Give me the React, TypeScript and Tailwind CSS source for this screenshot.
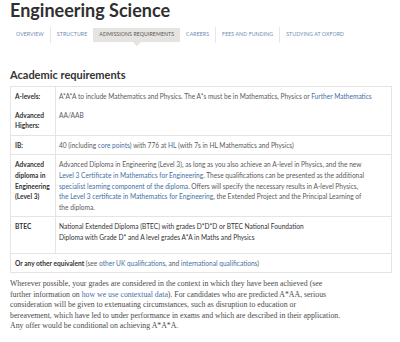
import React from 'react';

const tabs = [
  { label: 'Overview' },
  { label: 'Structure' },
  { label: 'Admissions requirements', active: true },
  { label: 'Careers' },
  { label: 'Fees and funding' },
  { label: 'Studying at Oxford' },
];

const A = ({ children }: { children: React.ReactNode }) => (
  <span className="text-[#3f6fa3]">{children}</span>
);

const Label = ({ children }: { children: React.ReactNode }) => (
  <td className="w-[45px] align-top px-[4px] py-[4px] font-bold text-[#333] border-r border-[#e4e4e4]">{children}</td>
);

const Cell = ({ children }: { children: React.ReactNode }) => (
  <td className="align-top px-[3px] py-[4px] text-[#5a5a5a] whitespace-nowrap">{children}</td>
);

export default function App() {
  return (
    <div className="w-[400px] h-[342px] overflow-hidden bg-white px-[10px] font-['Lato','Open_Sans',sans-serif]">
      <h1 className="text-[18px] leading-[22px] font-bold text-[#2f2f2f] -mt-[1px]">Engineering Science</h1>

      {/* Tabs */}
      <nav className="mt-[7px] flex items-stretch h-[14px]">
        {tabs.map((t, i) => {
          const prevActive = i > 0 && tabs[i - 1].active;
          const sep = i > 0 && !t.active && !prevActive;
          return (
            <div key={t.label} className="flex items-stretch">
              {sep && <div className="w-px bg-[#e6e6e6] -my-[1px]" />}
              <div
                className={`relative flex items-center px-[6px] text-[5.2px] uppercase tracking-[0.1px] ${
                  t.active ? 'bg-[#e6e4e0] text-[#555]' : 'text-[#6a8cb3]'
                }`}
              >
                {t.label}
                {t.active && (
                  <span className="absolute left-1/2 -bottom-[4px] -ml-[4px] w-0 h-0 border-l-[4px] border-r-[4px] border-t-[4px] border-l-transparent border-r-transparent border-t-[#e6e4e0]" />
                )}
              </div>
            </div>
          );
        })}
      </nav>

      <h2 className="mt-[26px] text-[11px] leading-[14px] font-bold text-[#333]">Academic requirements</h2>

      <table className="mt-[4px] w-[382px] border border-[#e4e4e4] border-collapse text-[6.6px] leading-[10.6px]">
        <tbody>
          <tr>
            <Label>A-levels:</Label>
            <Cell>
              A*A*A to include Mathematics and Physics. The A*s must be in Mathematics, Physics or <A>Further Mathematics</A>
            </Cell>
          </tr>
          <tr className="border-b border-[#e4e4e4]">
            <Label>
              Advanced
              <br />
              Highers:
            </Label>
            <Cell>AA/AAB</Cell>
          </tr>
          <tr className="border-b border-[#e4e4e4]">
            <Label>IB:</Label>
            <Cell>
              40 (including <A>core points</A>) with 776 at <A>HL</A> (with 7s in HL Mathematics and Physics)
            </Cell>
          </tr>
          <tr className="border-b border-[#e4e4e4]">
            <Label>
              Advanced
              <br />
              diploma in
              <br />
              Engineering
              <br />
              (Level 3)
            </Label>
            <Cell>
              Advanced Diploma in Engineering (Level 3), as long as you also achieve an A-level in Physics, and the new
              <br />
              <A>Level 3 Certificate in Mathematics for Engineering</A>. These qualifications can be presented as the additional
              <br />
              <A>specialist learning component of the diploma</A>. Offers will specify the necessary results in A-level Physics,
              <br />
              <A>the Level 3 certificate in Mathematics for Engineering</A>, the Extended Project and the Principal Learning of
              <br />
              the diploma.
            </Cell>
          </tr>
          <tr className="border-b border-[#e4e4e4]">
            <Label>BTEC</Label>
            <td className="align-top px-[3px] pt-[4px] pb-[10px] text-[#333] whitespace-nowrap">
              National Extended Diploma (BTEC) with grades D*D*D or BTEC National Foundation
              <br />
              Diploma with Grade D* and A level grades A*A in Maths and Physics
            </td>
          </tr>
          <tr>
            <td colSpan={2} className="px-[4px] py-[4px] text-[#5a5a5a]">
              <span className="font-bold text-[#333]">Or any other equivalent</span> (see <A>other UK qualifications</A>, and{' '}
              <A>international qualifications</A>)
            </td>
          </tr>
        </tbody>
      </table>

      <p className="mt-[6px] font-['Liberation_Serif',serif] text-[7.8px] leading-[10.5px] text-[#4a4a4a] whitespace-nowrap">
        Wherever possible, your grades are considered in the context in which they have been achieved (see
        <br />
        further information on <A>how we use contextual data</A>). For candidates who are predicted A*AA, serious
        <br />
        consideration will be given to extenuating circumstances, such as disruption to education or
        <br />
        bereavement, which have led to under performance in exams and which are described in their application.
        <br />
        Any offer would be conditional on achieving A*A*A.
      </p>
    </div>
  );
}
